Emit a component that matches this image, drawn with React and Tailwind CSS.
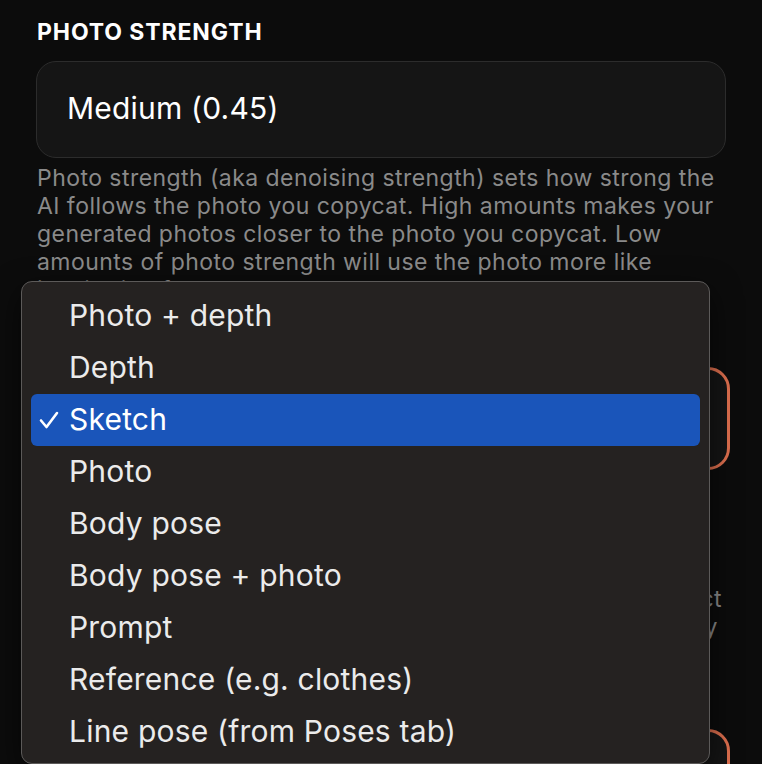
import React from "react";

const items = [
  "Photo + depth",
  "Depth",
  "Sketch",
  "Photo",
  "Body pose",
  "Body pose + photo",
  "Prompt",
  "Reference (e.g. clothes)",
  "Line pose (from Poses tab)",
];

export default function App() {
  return (
    <div
      className="relative w-[762px] h-[764px] overflow-hidden bg-[#0c0c0c] text-white"
      style={{ fontFamily: "Inter, 'Noto Sans', sans-serif" }}
    >
      <div className="flex flex-col px-[36px] pt-[18px] w-[762px]">
        <div className="pl-[1px] text-[23px] leading-[28px] font-bold tracking-[0.9px] text-white">
          PHOTO STRENGTH
        </div>
        <div className="mt-[15px] h-[97px] w-[690px] rounded-[20px] border border-[#2c2c2c] bg-[#151515] flex items-center pl-[30px] text-[30px] text-white">
          <span className="pb-[2px] tracking-[0.2px]">Medium (0.45)</span>
        </div>
        <div className="mt-[6px] pl-[1px] w-[700px] text-[23px] leading-[28px] tracking-[0.45px] text-[#8a8a8a] whitespace-nowrap">
          <div>Photo strength (aka denoising strength) sets how strong the</div>
          <div>AI follows the photo you copycat. High amounts makes your</div>
          <div>generated photos closer to the photo you copycat. Low</div>
          <div>amounts of photo strength will use the photo more like</div>
          <div>inspiration for a new photo.</div>
        </div>
        <div className="mt-[22px] pl-[1px] text-[23px] leading-[28px] font-bold tracking-[0.9px] text-white">
          COPYCAT MODE
        </div>
        <div className="mt-[13px] h-[103px] w-[694px] rounded-[22px] border-[3px] border-[#e0704f] bg-[#151515] flex items-center pl-[30px] text-[30px] text-white">
          Sketch
        </div>
        <div className="mt-[31px] pl-[1px] text-[23px] leading-[28px] tracking-[0.45px] text-[#8a8a8a]">
          <div className="whitespace-nowrap">Choose how the AI copies your photo. Depth copies</div>
          <div className="whitespace-nowrap">the 3D shape, sketch copies the outlines and body</div>
          <div className="whitespace-nowrap">pose copies only the pose of the person in the photo.</div>
          <div className="w-[685px] text-justify [text-align-last:justify]">Prompt copies the text description of the photo you select</div>
          <div className="w-[681px] text-justify [text-align-last:justify]">and reference copies the clothes from that photo precisely</div>
        </div>
        <div className="mt-[48px] pl-[1px] text-[23px] leading-[28px] font-bold tracking-[0.9px] text-white">
          MODEL
        </div>
        <div className="mt-[12px] h-[103px] w-[694px] rounded-[22px] border-[3px] border-[#e0704f] bg-[#151515]"></div>
      </div>

      <div className="absolute left-[21px] top-[281px] w-[689px] h-[483px] rounded-[11px] border border-[#5c5a59] bg-[#252221] shadow-[0_10px_30px_rgba(0,0,0,0.6)] px-[9px] pt-[8px] pb-[6px] flex flex-col">
        {items.map((it) => {
          const sel = it === "Sketch";
          return (
            <div
              key={it}
              className={
                "h-[52px] shrink-0 flex items-center rounded-[6px] text-[30px] leading-none " +
                (sel ? "bg-[#1a55ba] text-white" : "text-[#ebebeb]")
              }
            >
              <span className="w-[38px] pl-[8px] flex items-center">
                {sel ? (
                  <svg width="20" height="18" viewBox="0 0 20 18" fill="none">
                    <path d="M2 9.5 L7.5 16 L18 2" stroke="white" strokeWidth="2.6" strokeLinecap="round" strokeLinejoin="round" />
                  </svg>
                ) : null}
              </span>
              <span className="pb-[2px] tracking-[0.2px]">{it}</span>
            </div>
          );
        })}
      </div>
    </div>
  );
}
